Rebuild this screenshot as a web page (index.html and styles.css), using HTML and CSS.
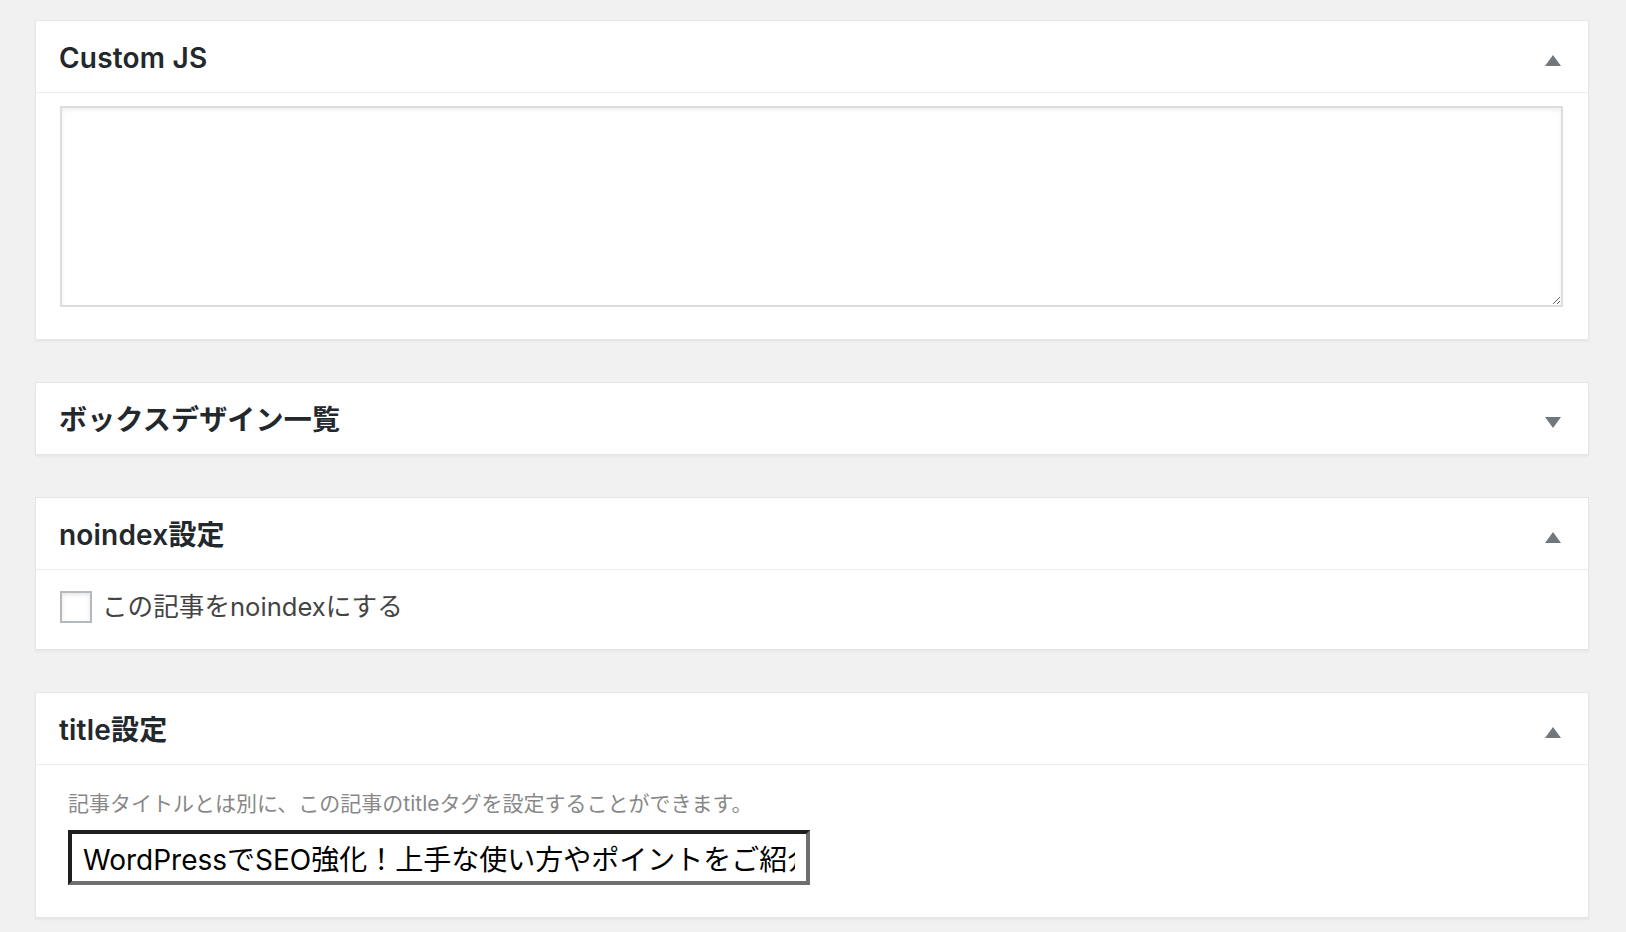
FILE: index.html
```html
<!DOCTYPE html>
<html lang="ja">

<head>
  <title>投稿の設定</title>
  <meta charset="utf-8">
  <meta name="viewport" content="width=device-width, initial-scale=1.0">
  <link rel="stylesheet" href="styles.css">
</head>

<body>
  <div class="metabox-area">

    <div class="postbox">
      <div class="postbox-header">
        <h2 class="hndle">Custom JS</h2>
        <span class="toggle-arrow up"></span>
      </div>
      <div class="inside inside-code">
        <textarea class="code-field"></textarea>
      </div>
    </div>

    <div class="postbox closed">
      <div class="postbox-header">
        <h2 class="hndle">ボックスデザイン一覧</h2>
        <span class="toggle-arrow down"></span>
      </div>
    </div>

    <div class="postbox">
      <div class="postbox-header">
        <h2 class="hndle">noindex設定</h2>
        <span class="toggle-arrow up"></span>
      </div>
      <div class="inside inside-check">
        <label class="check-label">
          <input type="checkbox" class="check-box">
          <span>この記事をnoindexにする</span>
        </label>
      </div>
    </div>

    <div class="postbox">
      <div class="postbox-header">
        <h2 class="hndle">title設定</h2>
        <span class="toggle-arrow up"></span>
      </div>
      <div class="inside inside-title">
        <p class="description">記事タイトルとは別に、この記事のtitleタグを設定することができます。</p>
        <input type="text" class="title-field" value="WordPressでSEO強化！上手な使い方やポイントをご紹介">
      </div>
    </div>

  </div>
</body>

</html>
```

FILE: styles.css
```css
body {
  margin: 0;
  background-color: #f1f1f1;
  font-family: Inter, "Noto Sans CJK JP", sans-serif;
  color: #23282d;
}

.metabox-area {
  padding: 20px 37px 0 35px;
}

.postbox {
  background-color: #fff;
  border: 1px solid #e5e5e5;
  box-shadow: 0 2px 2px rgba(0, 0, 0, 0.04);
  margin-bottom: 42px;
}

.postbox-header {
  display: flex;
  align-items: center;
  justify-content: space-between;
  height: 71px;
  padding: 0 27px 0 23px;
  border-bottom: 1px solid #eee;
}

.closed .postbox-header {
  border-bottom: none;
}

.hndle {
  margin: 0;
  padding-top: 4px;
  font-size: 28px;
  font-weight: 600;
  line-height: 1.3;
  letter-spacing: 0.2px;
  color: #23282d;
}

.toggle-arrow {
  width: 0;
  height: 0;
  margin-top: 8px;
  border-left: 8px solid transparent;
  border-right: 8px solid transparent;
}

.toggle-arrow.up {
  border-bottom: 11px solid #72777c;
}

.toggle-arrow.down {
  border-top: 11px solid #72777c;
}

.inside-code {
  padding: 13px 25px 32px 24px;
}

.code-field {
  display: block;
  box-sizing: border-box;
  width: 100%;
  height: 201px;
  margin: 0;
  border: 2px solid #ddd;
  box-shadow: inset 0 2px 4px rgba(0, 0, 0, 0.07);
  background-color: #fff;
  resize: vertical;
}

.inside-check {
  padding: 21px 24px 26px;
}

.check-label {
  display: flex;
  align-items: center;
  gap: 10px;
  height: 32px;
  font-size: 25.6px;
  line-height: 32px;
  color: #444;
}

.check-box {
  appearance: none;
  -webkit-appearance: none;
  width: 32px;
  height: 32px;
  margin: 0;
  border: 2px solid #b4b9be;
  background-color: #fff;
  box-shadow: inset 0 2px 4px rgba(0, 0, 0, 0.1);
}

.inside-title {
  padding: 25px 24px 32px 32px;
}

.description {
  margin: 0 0 12px;
  font-size: 21px;
  line-height: 28px;
  color: #888;
}

.title-field {
  box-sizing: border-box;
  width: 742px;
  height: 55px;
  margin: 0;
  padding: 0 11px;
  border-style: solid;
  border-width: 4px;
  border-color: #1e1e1e #6f6f6f #6f6f6f #1e1e1e;
  font-family: Inter, "Noto Sans CJK JP", sans-serif;
  font-size: 28px;
  color: #000;
  background-color: #fff;
  outline: none;
}
```
